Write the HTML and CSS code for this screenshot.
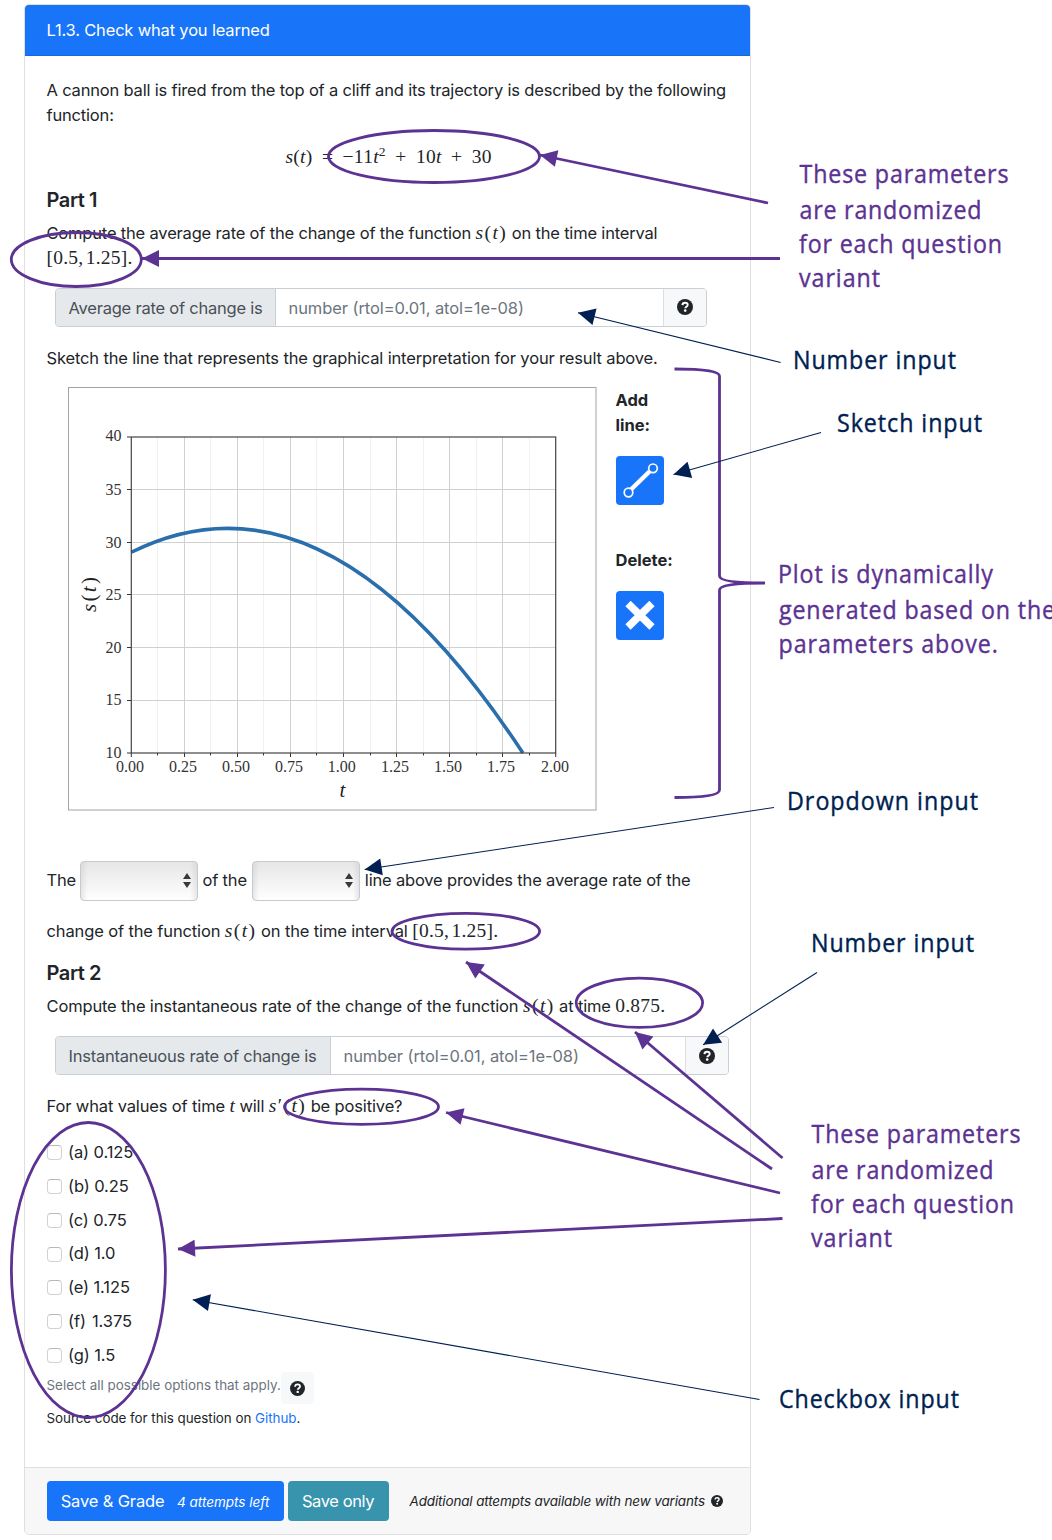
FILE: index.html
```html
<!DOCTYPE html>
<html lang="en">
<head>
<meta charset="utf-8">
<title>L1.3. Check what you learned</title>
<link rel="stylesheet" href="styles.css">
</head>
<body>
<svg class="defs" width="0" height="0">
  <symbol id="help" viewBox="0 0 16 16">
    <circle cx="8" cy="8" r="8" fill="#212529"/>
    <path d="M5.4 6.1C5.5 4.500 6.600 3.700 8.100 3.700C9.700 3.700 10.700 4.700 10.700 5.900C10.700 7.700 8.300 7.700 8.300 9.200" fill="none" stroke="#fff" stroke-width="1.9"/>
    <circle cx="8.200" cy="11.600" r="1.300" fill="#fff"/>
  </symbol>
</svg>
<main class="card">
  <header class="card-header"><span>L1.3. Check what you learned</span></header>
  <section class="card-body">
    <p class="line">A cannon ball is fired from the top of a cliff and its trajectory is described by the following</p>
    <p class="line">function:</p>
    <div class="equation math"><i>s</i>(<i>t</i>) = −11<i>t</i><sup>2</sup> + 10<i>t</i> + 30</div>
    <h2>Part 1</h2>
    <p class="line">Compute the average rate of the change of the function <span class="math fn"><i>s</i>(<i>t</i>)</span> on the time interval</p>
    <p class="line"><span class="math interval">[0.5, 1.25].</span></p>
    <div class="input-group first">
      <label>Average rate of change is</label>
      <div class="field">number (rtol=0.01, atol=1e-08)</div>
      <div class="hint"><svg width="16" height="16"><use href="#help"/></svg></div>
    </div>
    <p class="line sketch-line">Sketch the line that represents the graphical interpretation for your result above.</p>
    <div class="sketch">
      <svg class="plot" width="529" height="424" viewBox="68 387 529 424">
        <rect x="68.500" y="387.500" width="527.500" height="422.500" fill="#fff" stroke="#a3a3a3"/>
        <path class="minor" d="M157.500 437V753M210.500 437V753M263.500 437V753M316.500 437V753M370.500 437V753M423.500 437V753M476.500 437V753M529.500 437V753"/>
        <path class="major" d="M184.500 437V753M237.500 437V753M290.500 437V753M343.500 437V753M396.500 437V753M449.500 437V753M502.500 437V753M131 489.500H556M131 542.500H556M131 594.500H556M131 647.500H556M131 700.500H556"/>
        <path d="M131.300 552.300Q327.100 455 522.900 753" fill="none" stroke="#2a6fac" stroke-width="3.500"/>
        <path class="ticks" d="M127 437H131M127 489.500H131M127 542.500H131M127 594.500H131M127 647.500H131M127 700.500H131M127 753H131M131.300 753V757M184.500 753V757M237.500 753V757M290.500 753V757M343.500 753V757M396.500 753V757M449.500 753V757M502.500 753V757M555.700 753V757M157.500 753V755.500M210.500 753V755.500M263.500 753V755.500M316.500 753V755.500M370.500 753V755.500M423.500 753V755.500M476.500 753V755.500M529.500 753V755.500"/>
        <rect x="131.300" y="437" width="424.400" height="316" fill="none" stroke="#444" stroke-width="1.200"/>
        <g class="tick-y">
          <text x="121.500" y="441">40</text><text x="121.500" y="494.500">35</text><text x="121.500" y="547.500">30</text><text x="121.500" y="600">25</text><text x="121.500" y="653">20</text><text x="121.500" y="705">15</text><text x="121.500" y="757.500">10</text>
        </g>
        <g class="tick-x">
          <text x="130" y="772">0.00</text><text x="183" y="772">0.25</text><text x="236" y="772">0.50</text><text x="289" y="772">0.75</text><text x="341.700" y="772">1.00</text><text x="395" y="772">1.25</text><text x="448" y="772">1.50</text><text x="501" y="772">1.75</text><text x="555" y="772">2.00</text>
        </g>
        <text class="axis it" x="342.500" y="797">t</text>
        <text class="axis" transform="translate(96 594.500) rotate(-90)" textLength="35"><tspan class="it">s</tspan>(<tspan class="it">t</tspan>)</text>
      </svg>
      <div class="tools">
        <strong class="add">Add<br>line:</strong>
        <button class="tool" aria-label="Add line"><svg width="48" height="48" viewBox="0 0 48 48"><path d="M15 33.500L33.500 15.500" stroke="#fff" stroke-width="4.500"/><circle cx="12.500" cy="36.500" r="4.300"/><circle cx="37" cy="12.300" r="4.300"/></svg></button>
        <strong class="del">Delete:</strong>
        <button class="tool" aria-label="Delete"><svg width="48" height="48" viewBox="0 0 48 48"><path d="M12 12.500L36 36M36 12.500L12 36" stroke="#fff" stroke-width="7.500"/></svg></button>
      </div>
    </div>
    <div class="line choice-line">
      <span>The</span><span class="select s1"><svg width="8" height="15"><path d="M0 6L4 0L8 6ZM0 9L4 15L8 9Z"/></svg></span><span>of the</span><span class="select s2"><svg width="8" height="15"><path d="M0 6L4 0L8 6ZM0 9L4 15L8 9Z"/></svg></span><span>line above provides the average rate of the</span>
    </div>
    <p class="line change-line">change of the function <span class="math fn"><i>s</i>(<i>t</i>)</span> on the time interval <span class="math interval">[0.5, 1.25].</span></p>
    <h2 class="part2">Part 2</h2>
    <p class="line instant-line">Compute the instantaneous rate of the change of the function <span class="math fn"><i>s</i>(<i>t</i>)</span> at time <span class="math value">0.875.</span></p>
    <div class="input-group second">
      <label>Instantaneuous rate of change is</label>
      <div class="field">number (rtol=0.01, atol=1e-08)</div>
      <div class="hint"><svg width="16" height="16"><use href="#help"/></svg></div>
    </div>
    <p class="line values-line">For what values of time <i class="math">t</i> will <span class="math prime"><i>s</i>′(<i>t</i>)</span> be positive?</p>
    <ul class="options">
      <li><input type="checkbox"><span>(a)</span> 0.125</li>
      <li><input type="checkbox"><span>(b)</span> 0.25</li>
      <li><input type="checkbox"><span>(c)</span> 0.75</li>
      <li><input type="checkbox"><span>(d)</span> 1.0</li>
      <li><input type="checkbox"><span>(e)</span> 1.125</li>
      <li><input type="checkbox"><span>(f)</span> 1.375</li>
      <li><input type="checkbox"><span>(g)</span> 1.5</li>
    </ul>
    <div class="select-all"><span>Select all possible options that apply.</span><b><svg width="15" height="15"><use href="#help"/></svg></b></div>
    <p class="source">Source code for this question on <a>Github</a>.</p>
  </section>
  <footer class="card-footer">
    <button class="btn grade">Save &amp; Grade <em>4 attempts left</em></button>
    <button class="btn save">Save only</button>
    <em class="extra">Additional attempts available with new variants</em>
    <svg width="12" height="12"><use href="#help"/></svg>
  </footer>
</main>
<svg class="notes" width="1052" height="1540" viewBox="0 0 1052 1540">
  <defs>
    <marker id="hp" markerUnits="userSpaceOnUse" markerWidth="18" markerHeight="18" refX="0" refY="8.500" orient="auto"><path d="M0 8.500L17 0V17Z" fill="#5c3292"/></marker>
    <marker id="hn" markerUnits="userSpaceOnUse" markerWidth="18" markerHeight="18" refX="0" refY="8.500" orient="auto"><path d="M0 8.500L17 0V17Z" fill="#001f52"/></marker>
  </defs>
  <g class="purple">
    <ellipse cx="434" cy="156.500" rx="105.500" ry="26"/>
    <ellipse cx="76.300" cy="259.500" rx="65" ry="27"/>
    <ellipse cx="465.800" cy="931.200" rx="73.800" ry="17.900"/>
    <ellipse cx="639.400" cy="1002.800" rx="63.200" ry="24.600"/>
    <ellipse cx="361.500" cy="1106.800" rx="77" ry="17.600"/>
    <ellipse cx="88.400" cy="1270" rx="77" ry="147.500"/>
    <path d="M674.500 369Q719.500 369 719.500 376V576Q719.500 583 765 583Q719.500 583 719.500 590V790Q719.500 797.500 674.500 797.500"/>
  </g>
  <g class="purple arrows">
    <path d="M540 155L768 203"/><path d="M142 258.500H780"/><path d="M466 962L772 1169"/><path d="M635 1032L782.500 1158"/><path d="M446 1112.500L780 1193"/><path d="M178 1249L782.500 1218.500"/>
  </g>
  <g class="navy arrows">
    <path d="M578 312.700L780.600 362.500"/><path d="M673.500 474.500L821 432.500"/><path d="M364.700 869.500L774 807.500"/><path d="M703.200 1044.700L817 972.500"/><path d="M192.700 1299.700L759.500 1399.500"/>
  </g>
  <g class="note-p">
    <text transform="translate(799.500 183) scale(.93 1)" textLength="224.700">These parameters</text>
    <text transform="translate(799.500 219) scale(.93 1)" textLength="195.700">are randomized</text>
    <text transform="translate(799 253) scale(.93 1)" textLength="218.300">for each question</text>
    <text transform="translate(799 287) scale(.93 1)" textLength="87.100">variant</text>
    <text transform="translate(778 583) scale(.93 1)" textLength="231.200">Plot is dynamically</text>
    <text transform="translate(779 619) scale(.93 1)" textLength="296.800">generated based on the</text>
    <text transform="translate(778.500 653) scale(.93 1)" textLength="236">parameters above.</text>
    <text transform="translate(811.500 1143) scale(.93 1)" textLength="224.700">These parameters</text>
    <text transform="translate(811.500 1179) scale(.93 1)" textLength="195.700">are randomized</text>
    <text transform="translate(811 1213) scale(.93 1)" textLength="218.300">for each question</text>
    <text transform="translate(811 1247) scale(.93 1)" textLength="87.100">variant</text>
  </g>
  <g class="note-n">
    <text transform="translate(793 369) scale(.93 1)" textLength="175.300">Number input</text>
    <text transform="translate(837 432) scale(.93 1)" textLength="155.900">Sketch input</text>
    <text transform="translate(787 810) scale(.93 1)" textLength="205.400">Dropdown input</text>
    <text transform="translate(811 952) scale(.93 1)" textLength="175.300">Number input</text>
    <text transform="translate(779 1408) scale(.93 1)" textLength="193.500">Checkbox input</text>
  </g>
</svg>
</body>
</html>
```
FILE: styles.css
```css
* { box-sizing: border-box; }
body { margin: 0; position: relative; width: 1052px; height: 1540px; overflow: hidden; background: #fff; color: #212529; font: 16.5px/25.5px Inter, "Liberation Sans", sans-serif; letter-spacing: -.18px; }
.defs { position: absolute; }
p, h2, ul { margin: 0; padding: 0; }
.card { margin: 4px 0 0 24px; width: 727px; height: 1531px; border: 1px solid #dfdfdf; border-radius: 5px; display: flex; flex-direction: column; overflow: hidden; }
.card-header { height: 51px; flex: none; background: #1874f8; border-bottom: 1px solid #1568de; color: #fff; padding: 1px 21.5px 0; display: flex; align-items: center; }
.card-body { flex: 1; padding: 21.500px 21.500px 0; }
.line { height: 25.500px; white-space: nowrap; }
.math { font-family: "Liberation Serif", serif; font-size: 19.500px; line-height: 1; letter-spacing: 0; }
.math sup { font-size: 13.500px; line-height: 0; }
.fn { letter-spacing: 1.400px; }
.interval { letter-spacing: .2px; word-spacing: -2.500px; }
.value { letter-spacing: .2px; }
.prime { letter-spacing: 1.400px; }
.equation { height: 44px; padding: 18px 0 0 239px; white-space: nowrap; word-spacing: 4.300px; letter-spacing: .25px; }
h2 { font-size: 20px; line-height: 24px; font-weight: 600; letter-spacing: -.4px; margin: 15px 0 9px; }
.input-group { display: flex; height: 39px; margin-left: 8px; border: 1px solid #c9cfd5; border-radius: 4px; overflow: hidden; line-height: 39px; white-space: nowrap; }
.input-group label { background: #e6e9ec; color: #495057; border-right: 1px solid #c9cfd5; padding-left: 13px; letter-spacing: -.22px; }
.field { flex: 1; padding-left: 13px; color: #6c757d; letter-spacing: -.08px; }
.hint { width: 43px; border-left: 1px solid #dcdfe2; background: #f7f8fa; display: flex; align-items: center; justify-content: center; }
.first { width: 652px; margin-top: 16px; }
.first label { width: 220px; }
.second { width: 674px; margin-top: 16.500px; }
.second label { width: 275px; }
.sketch-line { margin-top: 19px; letter-spacing: -.15px; }
.sketch { display: flex; margin: 15.500px 0 0 21.500px; height: 424px; }
.plot { flex: none; }
.minor { stroke: #f1f1f1; }
.major { stroke: #d0d0d0; }
.ticks { stroke: #333; }
.tick-y, .tick-x { font: 16px "Liberation Serif", serif; letter-spacing: 0; fill: #333; }
.tick-y { text-anchor: end; }
.tick-x { text-anchor: middle; }
.axis { font: 21px "Liberation Serif", serif; text-anchor: middle; letter-spacing: 0; fill: #222; }
.it { font-style: italic; }
.tools { width: 70px; margin-left: 18.500px; display: flex; flex-direction: column; align-items: flex-start; font-size: 16.500px; letter-spacing: 0; }
.tools strong { font-weight: 700; }
.add { height: 51px; padding-top: 1px; margin-bottom: 18.500px; }
.del { height: 25px; margin: 43px 0 18.500px; }
.tool { width: 48.500px; height: 48.500px; padding: 0; border: 0; border-radius: 4px; background: #1874f8; }
.tool svg { display: block; }
.tool circle { fill: #1874f8; stroke: #fff; stroke-width: 1.700; }
.choice-line { display: flex; align-items: center; height: 40px; margin-top: 50px; }
.select { height: 40px; border: 1px solid #c5cbd1; border-radius: 4px; background: linear-gradient(90deg, rgba(200,200,200,.4), transparent 6%, transparent 94%, rgba(200,200,200,.4)), linear-gradient(#e6e6e6, #fff); display: flex; align-items: center; justify-content: flex-end; padding-right: 6px; }
.select path { fill: #343a40; }
.s1 { width: 118px; margin: 0 4.500px 0 4px; }
.s2 { width: 108px; margin: 0 5px; }
.change-line { margin-top: 18px; letter-spacing: -.13px; }
.part2 { margin: 17px 0 9px; }
.instant-line { letter-spacing: -.15px; }
.values-line { margin-top: 18.500px; letter-spacing: -.14px; }
.options { list-style: none; margin-top: 17px; letter-spacing: -.1px; }
.options li { height: 33.750px; display: flex; align-items: center; gap: 4.500px; }
.options input { appearance: none; width: 15px; height: 15px; margin: 0 2px 0 0; border: 1px solid #d2d2d2; border-top-color: #b8b8b8; border-radius: 4px; background: #fff; }
.options span { min-width: 19.500px; }
.select-all { display: flex; align-items: center; height: 32px; font-size: 13.400px; color: #6c757d; letter-spacing: 0; white-space: nowrap; }
.select-all span { padding-bottom: 5px; }
.select-all b { width: 33px; height: 32px; margin-left: 0; border-radius: 4px; background: #f7f8fa; display: flex; align-items: center; justify-content: center; }
.source { font-size: 13.400px; letter-spacing: -.04px; line-height: 20px; margin-top: 3.500px; }
.source a { color: #1874f8; }
.card-footer { height: 67px; flex: none; border-top: 1px solid #dfdfdf; background: #f7f7f7; display: flex; align-items: center; padding: 0 21.500px; white-space: nowrap; }
.btn { height: 40px; border: 0; border-radius: 4px; color: #fff; font: inherit; letter-spacing: -.15px; padding: 1px 0 0; }
.grade { width: 237px; padding-top: 2px; background: #1874f8; }
.grade em { font-size: 13.500px; margin-left: 8px; letter-spacing: 0; }
.save { width: 101px; margin-left: 4px; background: #3894ac; letter-spacing: -.4px; }
.extra { font-size: 13.500px; margin: 1px 6px 0 21px; letter-spacing: -.15px; }
.notes { position: absolute; left: 0; top: 0; }
.purple { fill: none; stroke: #5c3292; stroke-width: 2.800; }
.purple.arrows path { marker-start: url(#hp); }
.navy { fill: none; stroke: #001f52; stroke-width: 1.100; }
.navy path { marker-start: url(#hn); }
.note-p, .note-n { font: 25px "Open Sans", "Noto Sans", sans-serif; letter-spacing: 0; stroke-width: .4; }
.note-p { fill: #5c3292; stroke: #5c3292; }
.note-n { fill: #001f52; stroke: #001f52; }
```
